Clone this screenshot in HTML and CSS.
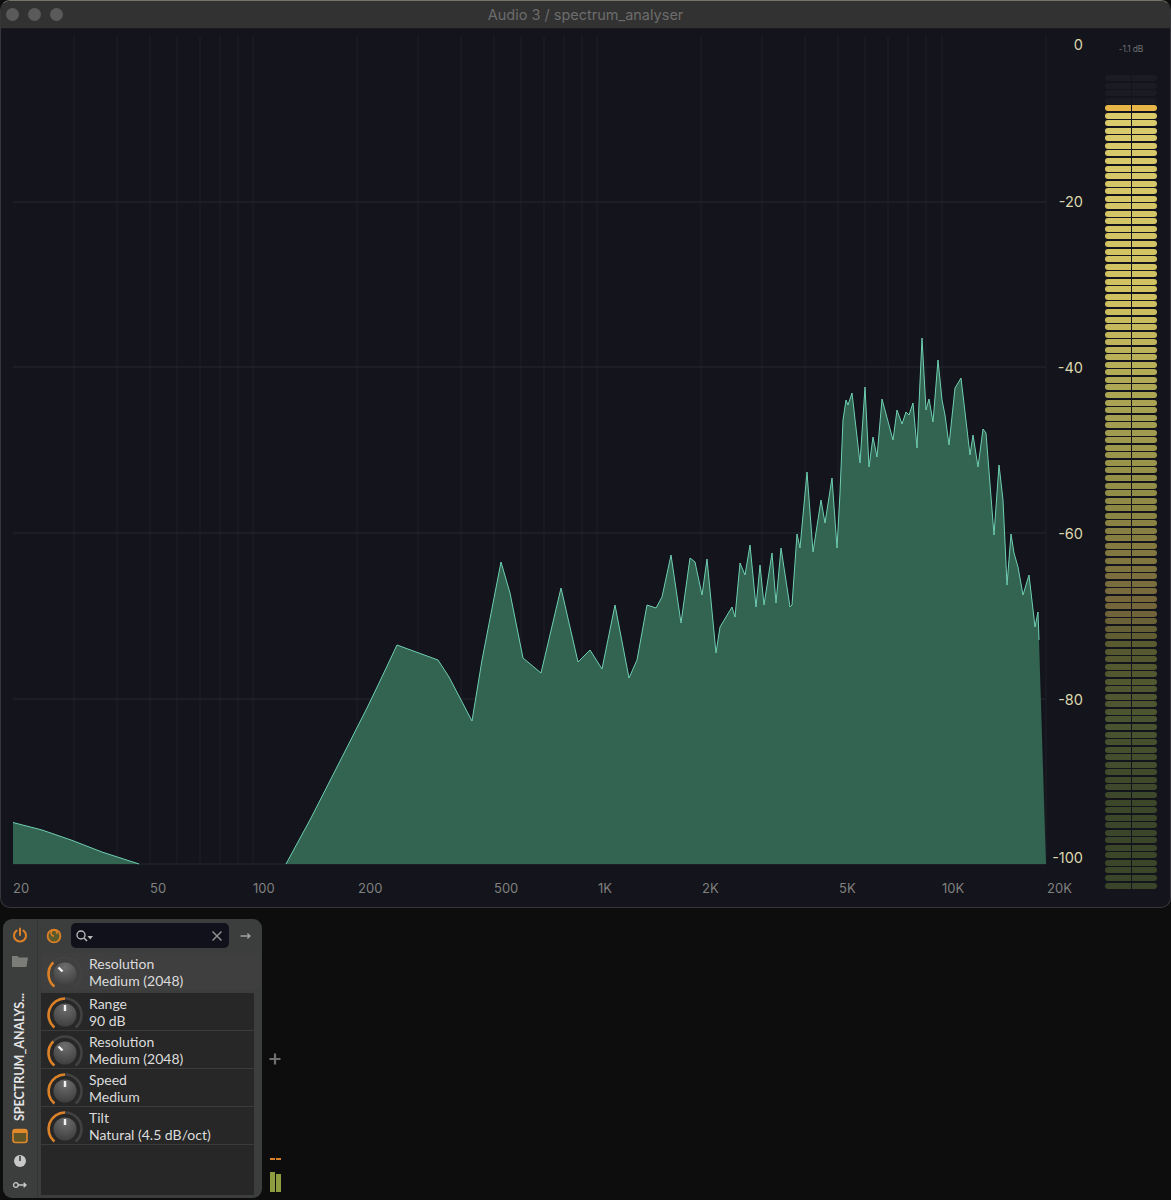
FILE: index.html
```html
<!DOCTYPE html>
<html lang="en">
<head>
    <meta charset="UTF-8">
    <title>Audio 3 / spectrum_analyser</title>
    <link rel="stylesheet" href="styles.css">
</head>
<body>
    <div class="window">
        <div class="titlebar">
            <div class="lights"><span></span><span></span><span></span></div>
            <div class="title">Audio 3 / spectrum_analyser</div>
        </div>
        <div class="display">
            <svg class="chart" width="1100" height="878" viewBox="0 29 1100 878">
                <path class="grid-v" d="M74 36V864M117 36V864M150 36V864M177 36V864M200 36V864M220 36V864M238 36V864M253 36V864M357 36V864M418 36V864M461 36V864M494 36V864M521 36V864M544 36V864M564 36V864M582 36V864M597 36V864M701 36V864M762 36V864M805 36V864M838 36V864M865 36V864M888 36V864M908 36V864M926 36V864M942 36V864M1046 36V864"/>
                <path class="grid-h" d="M13 202H1046M13 367H1046M13 533H1046M13 699H1046M13 864H1046"/>
                <path class="fill" d="M13 822.5L42 830L71 840L102 852L139 864H13Z"/>
                <path class="line" d="M13 822.5L42 830L71 840L102 852L139 864"/>
                <path class="fill" d="M286 864L311 818L337 767L367 708L380 681L397 645L438 660L449 677L472 721L482 660L501 562L510 593L523 658L541 673L561 588L578 662L590 650L602 669L615 605L629 678L637 660L647 605L656 608L662 597L671 555L681 623L690 558L695 562L702 595L707 559L716 653L720 627L732 607L735 617L740 563L745 575L750 545L756 607L760 565L764 605L772 553L776 603L781 548L790 607L792 605L797 534L800 548L807 472L813 552L821 500L825 523L832 478L837 548L840 493L843 420L846 400L848 405L852 393L860 463L865 387L869 467L873 437L877 457L882 399L893 440L897 410L902 424L906 412L909 415L913 403L917 448L922 338L926 410L929 399L933 422L938 360L942 400L945 415L949 445L955 388L961 378L970 455L973 435L978 467L983 429L986 433L994 535L999 465L1003 500L1007 585L1011 534L1014 553L1018 567L1023 595L1029 575L1035 627L1038 612L1039 640L1046 864Z"/>
                <path class="line" d="M286 864L311 818L337 767L367 708L380 681L397 645L438 660L449 677L472 721L482 660L501 562L510 593L523 658L541 673L561 588L578 662L590 650L602 669L615 605L629 678L637 660L647 605L656 608L662 597L671 555L681 623L690 558L695 562L702 595L707 559L716 653L720 627L732 607L735 617L740 563L745 575L750 545L756 607L760 565L764 605L772 553L776 603L781 548L790 607L792 605L797 534L800 548L807 472L813 552L821 500L825 523L832 478L837 548L840 493L843 420L846 400L848 405L852 393L860 463L865 387L869 467L873 437L877 457L882 399L893 440L897 410L902 424L906 412L909 415L913 403L917 448L922 338L926 410L929 399L933 422L938 360L942 400L945 415L949 445L955 388L961 378L970 455L973 435L978 467L983 429L986 433L994 535L999 465L1003 500L1007 585L1011 534L1014 553L1018 567L1023 595L1029 575L1035 627L1038 612L1039 640"/>
                <g class="db">
                    <text x="1083" y="50">0</text>
                    <text x="1083" y="207">-20</text>
                    <text x="1083" y="373">-40</text>
                    <text x="1083" y="539">-60</text>
                    <text x="1083" y="705">-80</text>
                    <text x="1083" y="863">-100</text>
                </g>
                <g class="freq">
                    <text x="13" y="893">20</text>
                    <text x="150" y="893">50</text>
                    <text x="253" y="893">100</text>
                    <text x="358" y="893">200</text>
                    <text x="494" y="893">500</text>
                    <text x="598" y="893">1K</text>
                    <text x="702" y="893">2K</text>
                    <text x="839" y="893">5K</text>
                    <text x="942" y="893">10K</text>
                    <text x="1047" y="893">20K</text>
                </g>
            </svg>
            <div class="meter">
                <div class="meter-label">-1.1 dB</div>
                <div class="meter-bars" id="meterBars"></div>
            </div>
        </div>
    </div>

    <div class="rack">
        <div class="device">
            <div class="side">
                <svg class="side-icon power" width="16" height="16" viewBox="0 0 16 16">
                    <path d="M4.6 3.6A6 6 0 1 0 11.4 3.6M8 1.5V8" fill="none" stroke="#dd8126" stroke-width="2" stroke-linecap="round"/>
                </svg>
                <svg class="side-icon folder" width="18" height="16" viewBox="0 0 18 16">
                    <path d="M1 3H6.5L8 4.6H17L15.5 14H1Z" fill="#7c7c78"/>
                </svg>
                <div class="device-name">SPECTRUM_ANALYS...</div>
                <svg class="side-icon cal" width="16" height="16" viewBox="0 0 16 16">
                    <rect x="1" y="1.5" width="14" height="13" rx="2.5" fill="#5f5527" stroke="#e08a2c" stroke-width="1.6"/>
                    <rect x="1" y="1.5" width="14" height="3.5" fill="#e08a2c"/>
                </svg>
                <svg class="side-icon clock" width="16" height="16" viewBox="0 0 16 16">
                    <circle cx="8" cy="8" r="6" fill="#c8c8c8"/>
                    <path d="M8 3V8" stroke="#3b3c3c" stroke-width="1.6"/>
                </svg>
                <svg class="side-icon key" width="16" height="16" viewBox="0 0 16 16">
                    <circle cx="3.8" cy="8" r="2.3" fill="none" stroke="#c8c8c8" stroke-width="1.3"/>
                    <path d="M6 8H14M11.6 5.8L14 8L11.6 10.2" fill="none" stroke="#c8c8c8" stroke-width="1.3"/>
                </svg>
            </div>
            <div class="main">
                <div class="head">
                    <svg class="preset" width="16" height="16" viewBox="0 0 16 16">
                        <circle cx="8" cy="8" r="6.4" fill="#5d5a2c" stroke="#dd8126" stroke-width="1.8"/>
                        <path d="M8 8A3 3 0 1 1 10.8 6" fill="none" stroke="#dd8126" stroke-width="1.5"/>
                    </svg>
                    <div class="search">
                        <svg width="20" height="14" viewBox="0 0 20 14">
                            <circle cx="6" cy="6" r="4" fill="none" stroke="#b8b8b8" stroke-width="1.4"/>
                            <path d="M9 9L12 12" stroke="#b8b8b8" stroke-width="1.6"/>
                            <path d="M12.5 7H18L15.2 10.5Z" fill="#b8b8b8"/>
                        </svg>
                        <svg class="clear" width="12" height="12" viewBox="0 0 12 12">
                            <path d="M1.5 1.5L10.5 10.5M10.5 1.5L1.5 10.5" stroke="#8f8f8f" stroke-width="1.5"/>
                        </svg>
                    </div>
                    <svg class="arrow" width="11" height="8" viewBox="0 0 11 8">
                        <path d="M0.5 4H10M7.4 1.6L10 4L7.4 6.4" fill="none" stroke="#a0a0a0" stroke-width="1.3"/>
                    </svg>
                </div>

                <div class="param selected">
                    <svg class="knob top-knob" width="40" height="40" viewBox="0 0 40 40">
                        <use href="#knobBase"/>
                        <path class="knob-arc" d="M9.4 32.6A16.5 16.5 0 0 1 8.3 8.3"/>
                        <path class="knob-tick" d="M13.5 13.5L17.5 17.5"/>
                    </svg>
                    <div class="param-text"><div>Resolution</div><div>Medium (2048)</div></div>
                </div>

                <div class="list">
                    <div class="param">
                        <svg class="knob" width="40" height="40" viewBox="0 0 40 40">
                            <use href="#knobBase"/>
                            <path class="knob-arc" d="M9.4 32.6A16.5 16.5 0 0 1 20 3.5"/>
                            <path class="knob-tick" d="M20 10V16"/>
                        </svg>
                        <div class="param-text"><div>Range</div><div>90 dB</div></div>
                    </div>
                    <div class="param">
                        <svg class="knob" width="40" height="40" viewBox="0 0 40 40">
                            <use href="#knobBase"/>
                            <path class="knob-arc" d="M9.4 32.6A16.5 16.5 0 0 1 8.3 8.3"/>
                            <path class="knob-tick" d="M13.5 13.5L17.5 17.5"/>
                        </svg>
                        <div class="param-text"><div>Resolution</div><div>Medium (2048)</div></div>
                    </div>
                    <div class="param">
                        <svg class="knob" width="40" height="40" viewBox="0 0 40 40">
                            <use href="#knobBase"/>
                            <path class="knob-arc" d="M9.4 32.6A16.5 16.5 0 0 1 20 3.5"/>
                            <path class="knob-tick" d="M20 10V16"/>
                        </svg>
                        <div class="param-text"><div>Speed</div><div>Medium</div></div>
                    </div>
                    <div class="param">
                        <svg class="knob" width="40" height="40" viewBox="0 0 40 40">
                            <use href="#knobBase"/>
                            <path class="knob-arc" d="M9.4 32.6A16.5 16.5 0 0 1 20 3.5"/>
                            <path class="knob-tick" d="M20 10V16"/>
                        </svg>
                        <div class="param-text"><div>Tilt</div><div>Natural (4.5 dB/oct)</div></div>
                    </div>
                </div>
            </div>
        </div>
        <div class="tail">
            <svg class="plus" width="12" height="12" viewBox="0 0 12 12">
                <path d="M6 0.5V11.5M0.5 6H11.5" stroke="#707070" stroke-width="2.2"/>
            </svg>
            <div class="mini-meter">
                <div class="mini-peaks"><span></span><span></span></div>
                <div class="mini-bars"><span></span><span class="low"></span></div>
            </div>
        </div>
    </div>

    <svg class="defs" width="0" height="0">
        <defs>
            <radialGradient id="knobFace" cx="50%" cy="20%" r="85%">
                <stop offset="0" stop-color="#6e6e6e"/>
                <stop offset="1" stop-color="#3c3c3c"/>
            </radialGradient>
            <g id="knobBase">
                <path d="M9.4 32.6A16.5 16.5 0 1 1 30.6 32.6" fill="none" stroke="#424242" stroke-width="2.6"/>
                <circle cx="20" cy="20" r="11.5" fill="url(#knobFace)"/>
            </g>
        </defs>
    </svg>

    <script src="meter.js"></script>
</body>
</html>
```
FILE: styles.css
```css
* {
    padding: 0px;
    margin: 0px;
    box-sizing: border-box;
}
body {
    background-color: #0d0d0e;
    font-family: "Lato", "Liberation Sans", sans-serif;
    overflow: hidden;
}
.window {
    height: 908px;
    border: 1px solid #37373b;
    border-top-color: #77736a;
    border-radius: 10px;
    overflow: hidden;
    background-color: #13141c;
}
.titlebar {
    display: flex;
    align-items: center;
    height: 28px;
    position: relative;
    background-color: #323232;
    border-bottom: 1px solid #1b1b1d;
}
.lights {
    display: flex;
    gap: 9px;
    padding-left: 5px;
}
.lights span {
    width: 13px;
    height: 13px;
    border-radius: 50%;
    background-color: #5a5a5a;
}
.title {
    position: absolute;
    left: 0px;
    right: 0px;
    text-align: center;
    font-family: "Inter", "Liberation Sans", sans-serif;
    font-size: 14.5px;
    color: #6c6c6c;
}
.display {
    display: flex;
    margin-left: -1px;
}
.chart {
    display: block;
    flex: none;
}
.grid-v {
    stroke: #1e1f27;
    stroke-width: 1;
    fill: none;
}
.grid-h {
    stroke: #272830;
    stroke-width: 1;
    fill: none;
}
.fill {
    fill: #336351;
}
.line {
    fill: none;
    stroke: #6fcfb2;
    stroke-width: 1;
    stroke-linejoin: round;
}
.db text {
    font-family: "Inter", "Liberation Sans", sans-serif;
    font-size: 14.5px;
    fill: #dcd6ae;
    text-anchor: end;
}
.freq text {
    font-family: "Inter", "Liberation Sans", sans-serif;
    font-size: 13px;
    fill: #80807e;
}
.meter {
    flex: 1;
    padding-left: 5px;
}
.meter-label {
    width: 52px;
    margin-top: 15px;
    height: 10px;
    line-height: 10px;
    text-align: center;
    font-family: "Inter", "Liberation Sans", sans-serif;
    font-size: 8.5px;
    letter-spacing: -0.2px;
    color: #6f7070;
}
.meter-bars {
    margin-top: 21px;
    width: 52px;
}
.meter-row {
    display: flex;
    gap: 1px;
    height: 6px;
    margin-bottom: 1.55px;
}
.meter-row span {
    flex: 1;
}
.meter-row span:first-child {
    border-radius: 3px 0px 0px 3px;
}
.meter-row span:last-child {
    border-radius: 0px 3px 3px 0px;
}
.rack {
    display: flex;
    padding: 11px 0px 0px 3px;
}
.device {
    display: flex;
    flex: none;
    width: 259px;
    height: 279px;
    border-radius: 9px;
    overflow: hidden;
    background-color: #3c3d3d;
}
.side {
    display: flex;
    flex-direction: column;
    align-items: center;
    flex: none;
    width: 35px;
    padding-top: 8px;
    border-right: 1px solid #333434;
}
.side-icon {
    display: block;
    flex: none;
}
.folder {
    margin-top: 10px;
}
.device-name {
    margin-top: 16px;
    height: 136px;
    writing-mode: vertical-rl;
    transform: rotate(180deg);
    text-align: left;
    white-space: nowrap;
    font-size: 12.5px;
    font-weight: 700;
    line-height: 16px;
    color: #e4e4e4;
}
.cal {
    margin-top: 7px;
}
.clock {
    margin-top: 9px;
}
.key {
    margin-top: 8px;
}
.main {
    display: flex;
    flex-direction: column;
    flex: 1;
    min-width: 0;
    padding: 4px 3px 3px 3px;
}
.head {
    display: flex;
    align-items: center;
    flex: none;
    height: 25px;
    margin-bottom: 5px;
}
.preset {
    margin-left: 5px;
    flex: none;
}
.search {
    display: flex;
    align-items: center;
    justify-content: space-between;
    width: 158px;
    height: 25px;
    margin-left: 9px;
    padding: 0px 6px 0px 4px;
    border-radius: 5px;
    background-color: #10111a;
}
.arrow {
    margin-left: 11px;
}
.param {
    display: flex;
    height: 38px;
    padding-left: 4px;
    overflow: hidden;
    border-bottom: 1px solid #3b3b3b;
}
.param.selected {
    flex: none;
    height: 37px;
    margin-bottom: 3px;
    border-bottom: 0px;
    border-radius: 4px;
    background-color: #3f3f3f;
}
.knob {
    flex: none;
    margin-top: 2px;
}
.top-knob {
    margin-top: 1px;
}
.knob-arc {
    fill: none;
    stroke: #dd8126;
    stroke-width: 2.6;
}
.knob-tick {
    fill: none;
    stroke: #f2f2f2;
    stroke-width: 2.4;
}
.param-text {
    margin-left: 4px;
    padding-top: 2px;
    font-size: 14px;
    line-height: 17px;
    color: #dcdcdc;
    white-space: nowrap;
}
.list {
    flex: 1;
    margin-right: 5px;
    background-color: #272727;
}
.tail {
    display: grid;
    grid-template-rows: 1fr auto 1fr;
    justify-items: center;
    width: 26px;
    height: 279px;
}
.plus {
    grid-row: 2;
}
.mini-meter {
    grid-row: 3;
    align-self: end;
    padding-bottom: 6px;
}
.mini-peaks {
    display: flex;
    gap: 1px;
    margin-bottom: 12px;
}
.mini-peaks span {
    width: 5px;
    height: 2px;
    background-color: #d87f2a;
}
.mini-bars {
    display: flex;
    align-items: flex-end;
    gap: 1px;
    height: 20px;
}
.mini-bars span {
    width: 5px;
    height: 20px;
    background-color: #8c9c3e;
}
.mini-bars .low {
    height: 18px;
}
.defs {
    position: absolute;
}
```
FILE: meter.js
```js
var oBars = document.getElementById('meterBars');
var stops = [
    [107, [232, 181, 72]],
    [115, [217, 203, 108]],
    [300, [207, 192, 96]],
    [400, [169, 163, 83]],
    [500, [143, 138, 69]],
    [607, [116, 100, 58]],
    [650, [86, 89, 47]],
    [720, [75, 84, 48]],
    [800, [60, 70, 41]],
    [893, [58, 68, 40]]
];

function colorAt(y) {
    for (var i = 1; i < stops.length; i++) {
        if (y <= stops[i][0]) {
            var t = (y - stops[i - 1][0]) / (stops[i][0] - stops[i - 1][0]),
                a = stops[i - 1][1],
                b = stops[i][1];
            return 'rgb(' + Math.round(a[0] + (b[0] - a[0]) * t) + ',' +
                Math.round(a[1] + (b[1] - a[1]) * t) + ',' +
                Math.round(a[2] + (b[2] - a[2]) * t) + ')';
        }
    }
    return 'rgb(58,68,40)';
}

// 4 unlit rows above the peak, then 104 lit ones
for (var i = -4; i < 104; i++) {
    var row = document.createElement('div'),
        color = i < 0 ? '#1b1c22' : colorAt(107 + i * 7.55);
    row.className = 'meter-row';
    row.innerHTML = '<span style="background-color:' + color + '"></span><span style="background-color:' + color + '"></span>';
    oBars.appendChild(row);
}
```
